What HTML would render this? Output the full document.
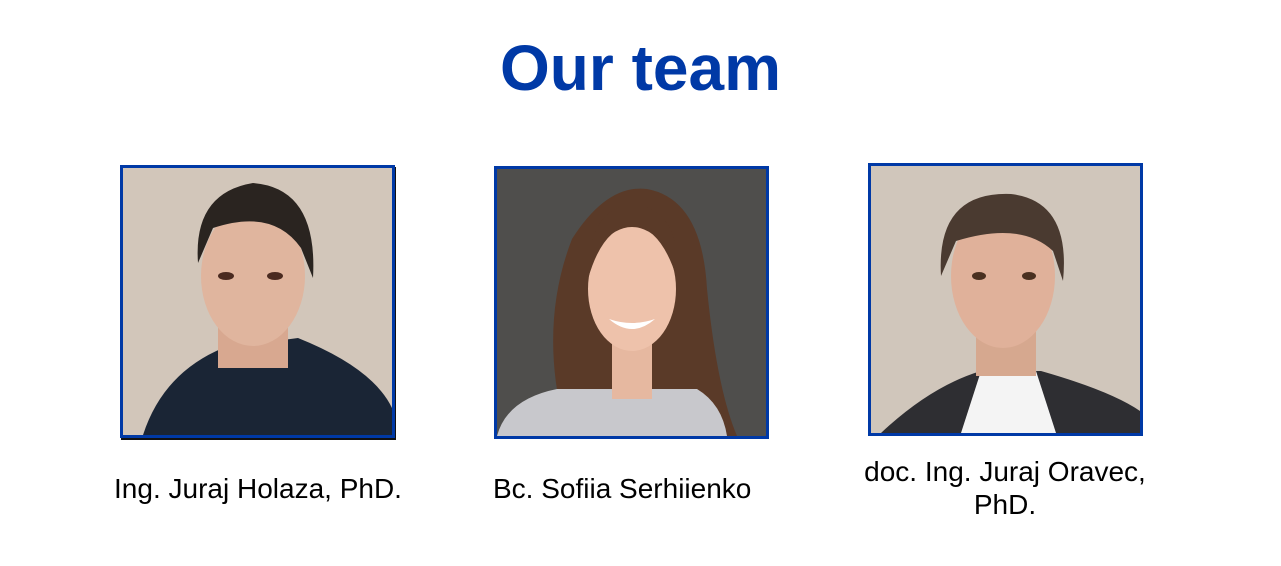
<!DOCTYPE html>
<html><head><meta charset="utf-8"><style>
body{margin:0;width:1281px;height:566px;background:#fff;position:relative;overflow:hidden;font-family:"Liberation Sans",Arial,sans-serif}
h1{position:absolute;top:31px;left:0;width:1281px;text-align:center;margin:0;font-size:64px;font-weight:bold;color:#0039a6;line-height:74px}
.f{position:absolute;width:269px;height:267px;border:3px solid #0039a6;overflow:hidden}
.f svg{display:block}
.n{position:absolute;font-size:28px;color:#000;line-height:33px;text-align:center}
</style></head><body>
<h1>Our team</h1>
<div class="f" style="left:120px;top:165px;box-shadow:1px 2px 0 #111">
<svg width="269" height="267"><rect width="269" height="267" fill="#d2c6ba"/>
<path d="M20 267 Q40 205 100 180 L175 170 Q250 200 269 240 L269 267Z" fill="#1a2535"/>
<rect x="95" y="140" width="70" height="60" fill="#d8a890"/>
<ellipse cx="130" cy="108" rx="52" ry="70" fill="#e0b59e"/>
<path d="M75 95 Q70 25 130 15 Q195 20 190 110 L178 80 Q150 40 90 60Z" fill="#2a2420"/>
<ellipse cx="103" cy="108" rx="8" ry="4" fill="#4a2a20"/><ellipse cx="152" cy="108" rx="8" ry="4" fill="#4a2a20"/>
</svg></div>
<div class="f" style="left:494px;top:166px">
<svg width="269" height="267"><rect width="269" height="267" fill="#4f4e4c"/>
<path d="M70 267 Q40 160 75 70 Q110 15 150 20 Q205 30 210 120 Q220 220 240 267Z" fill="#5a3a28"/>
<path d="M0 267 Q10 230 60 220 L200 220 Q225 235 230 267Z" fill="#c8c8cc"/>
<rect x="115" y="170" width="40" height="60" fill="#e6b8a0"/>
<ellipse cx="135" cy="120" rx="44" ry="62" fill="#eec2ab"/>
<path d="M91 110 Q90 40 135 35 Q185 40 180 110 Q165 60 135 55 Q105 60 91 110Z" fill="#5a3a28"/>
<path d="M112 150 Q135 170 158 150 Q135 158 112 150Z" fill="#fff"/>
</svg></div>
<div class="f" style="left:868px;top:163px">
<svg width="269" height="267"><rect width="269" height="267" fill="#d0c6bb"/>
<path d="M10 267 Q60 220 110 205 L170 205 Q240 225 269 245 L269 267Z" fill="#2e2e32"/>
<path d="M90 267 L110 205 L165 205 L185 267Z" fill="#f4f4f4"/>
<rect x="105" y="150" width="60" height="60" fill="#d6a88f"/>
<ellipse cx="132" cy="110" rx="52" ry="72" fill="#e0b19a"/>
<path d="M70 110 Q65 25 140 28 Q200 35 192 115 L182 85 Q150 55 85 75Z" fill="#4a3a30"/>
<ellipse cx="108" cy="110" rx="7" ry="4" fill="#4a3020"/><ellipse cx="158" cy="110" rx="7" ry="4" fill="#4a3020"/>
</svg></div>
<div class="n" style="left:78px;top:472px;width:360px">Ing. Juraj Holaza, PhD.</div>
<div class="n" style="left:493px;top:472px;text-align:left">Bc. Sofiia Serhiienko</div>
<div class="n" style="left:835px;top:455px;width:340px">doc. Ing. Juraj Oravec,<br>PhD.</div>
</body></html>
